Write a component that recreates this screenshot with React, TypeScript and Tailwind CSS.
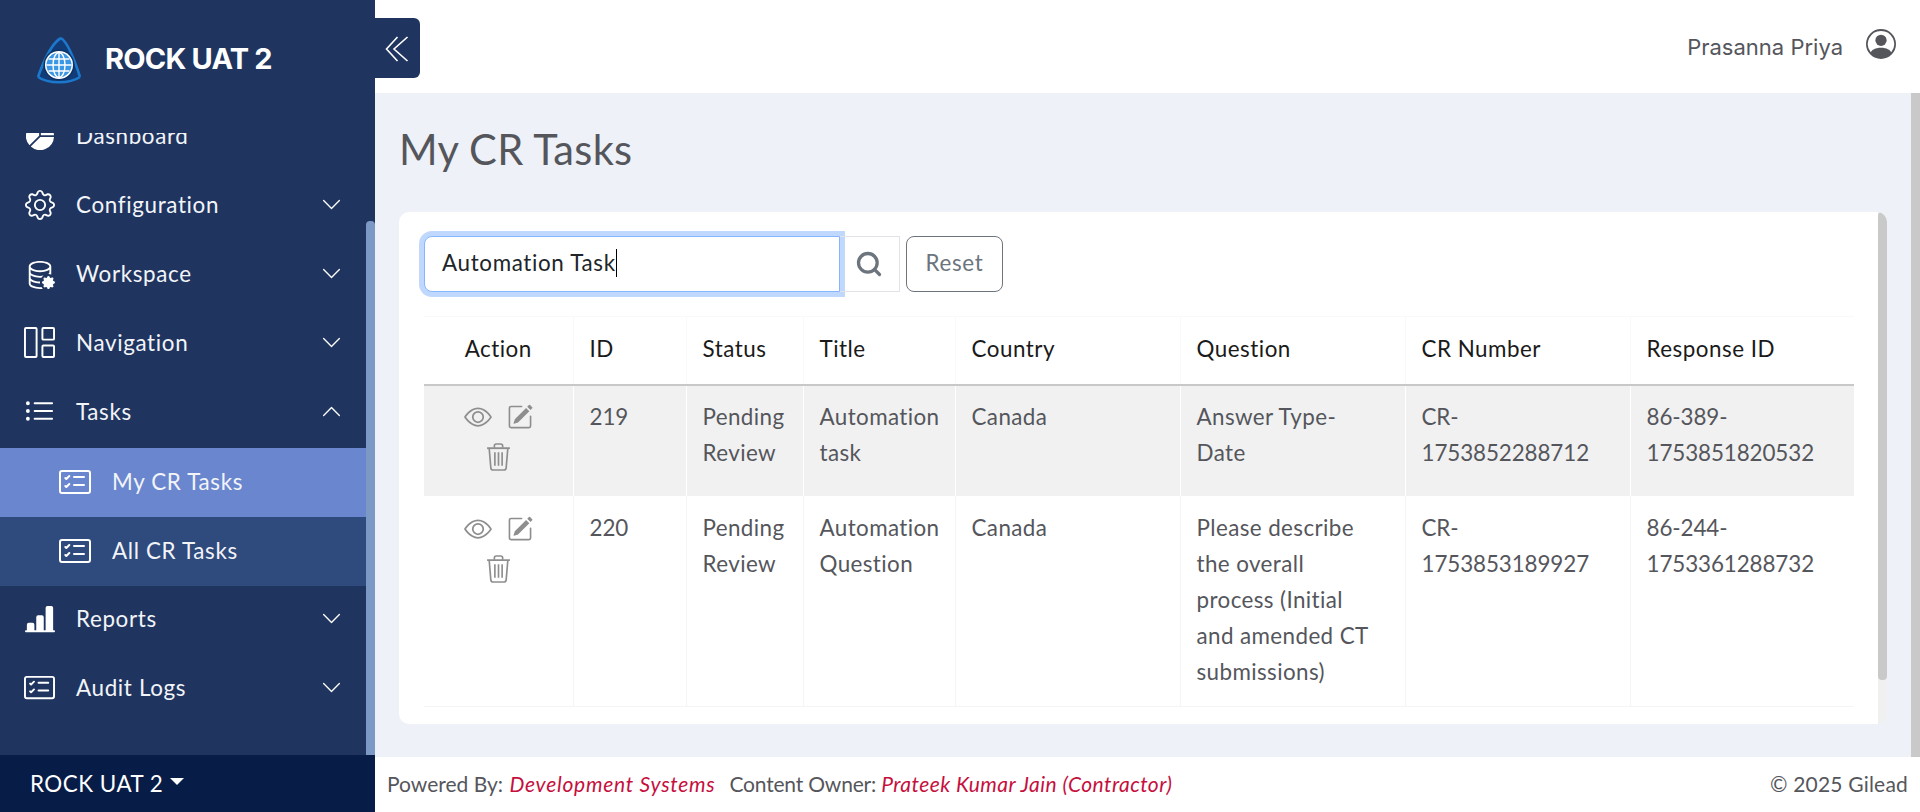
import React from 'react';
import {
  BsBarChartLineFill,
  BsCardChecklist,
  BsChevronDown,
  BsChevronUp,
  BsDatabaseGear,
  BsEye,
  BsGear,
  BsGrid1X2,
  BsListUl,
  BsPencilSquare,
  BsPersonCircle,
  BsPieChartFill,
} from 'react-icons/bs';
import { Search } from 'lucide-react';

const navTop = [
  { label: 'Dashboard', icon: <BsPieChartFill size={28} /> },
  { label: 'Configuration', icon: <BsGear size={30} />, chevron: 'down' },
  { label: 'Workspace', icon: <BsDatabaseGear size={30} />, chevron: 'down' },
  { label: 'Navigation', icon: <BsGrid1X2 size={31} />, chevron: 'down' },
  { label: 'Tasks', icon: <BsListUl size={32} />, chevron: 'up' },
];

const navBottom = [
  { label: 'Reports', icon: <BsBarChartLineFill size={30} />, chevron: 'down' },
  { label: 'Audit Logs', icon: <BsCardChecklist size={31} />, chevron: 'down' },
];

const rows = [
  {
    id: '219',
    status: 'Pending Review',
    title: 'Automation task',
    country: 'Canada',
    question: 'Answer Type-Date',
    cr: 'CR-1753852288712',
    response: '86-389-1753851820532',
  },
  {
    id: '220',
    status: 'Pending Review',
    title: 'Automation Question',
    country: 'Canada',
    question: 'Please describe the overall process (Initial and amended CT submissions)',
    cr: 'CR-1753853189927',
    response: '86-244-1753361288732',
  },
];

const columns = ['Action', 'ID', 'Status', 'Title', 'Country', 'Question', 'CR Number', 'Response ID'];

const Logo = () => (
  <svg width="46" height="48" viewBox="0 0 46 48" fill="none">
    <path d="M25 2 C31 6 37 20 44 40 C34 48 12 48 2 41 C8 24 16 7 25 2 Z" fill="#123c78" />
    <path d="M25 2 C31 6 38 22 44 41 M25 2 C16 7 8 24 2 41 M2 41 C12 48 34 48 44 41" stroke="#1b78cc" strokeWidth="2.6" />
    <circle cx="23" cy="29" r="15.5" fill="#0d3266" />
    <circle cx="23" cy="29" r="14" fill="#fff" />
    <circle cx="23" cy="29" r="12.5" fill="#3a97e6" />
    <g stroke="#fff" strokeWidth="1.4" fill="none">
      <ellipse cx="23" cy="29" rx="6" ry="12.5" />
      <path d="M23 16.5 V41.5 M10.5 29 H35.5 M12.5 23 H33.5 M12.5 35 H33.5" />
    </g>
  </svg>
);

const Collapse = () => (
  <svg width="24" height="26" viewBox="0 0 24 26" fill="none" stroke="#fff" strokeWidth="1.6">
    <path d="M12.5 1 L1.5 13 L12.5 25" />
    <path d="M22.5 1 L9 13 L22.5 25" />
  </svg>
);

const Trash = () => (
  <svg width="25" height="28" viewBox="0 0 24 27" fill="none" stroke="#8e8e8e" strokeWidth="1.6">
    <path d="M1 5 H23" strokeWidth="1.8" />
    <path d="M8 4.5 V2.8 C8 1.8 8.8 1 9.8 1 H14.2 C15.2 1 16 1.8 16 2.8 V4.5" />
    <path d="M3 5 L4.6 24 C4.7 25.2 5.5 26 6.6 26 H17.4 C18.5 26 19.3 25.2 19.4 24 L21 5" />
    <path d="M8.5 9 V22 M12 9 V22 M15.5 9 V22" />
  </svg>
);

const NavRow = ({ item }: { item: { label: string; icon: React.ReactNode; chevron?: string } }) => (
  <div className="h-[69px] flex items-center pb-[4px] pl-6 pr-[24px] shrink-0">
    <span className="w-[31px] flex justify-center text-white">{item.icon}</span>
    <span className="ml-[21px] flex-1 text-[22.4px] tracking-[0.65px] text-[#f2f4f8]">{item.label}</span>
    {item.chevron === 'down' && <BsChevronDown size={21} className="text-white" />}
    {item.chevron === 'up' && <BsChevronUp size={21} className="text-white" />}
  </div>
);

const SubRow = ({ label, active }: { label: string; active?: boolean }) => (
  <div className={`h-[69px] flex items-center pb-[1px] pl-[59px] shrink-0 ${active ? 'bg-[#6a86ce]' : 'bg-[#2f4a7c]'}`}>
    <BsCardChecklist size={32} className="text-white" />
    <span className="ml-[21px] text-[22.4px] tracking-[0.65px] text-[#f2f4f8]">{label}</span>
  </div>
);

export default function App() {
  return (
    <div className="h-[812px] w-[1920px] flex overflow-hidden bg-white font-['Lato',sans-serif] text-[#55565c]">
      {/* Sidebar */}
      <aside className="w-[375px] shrink-0 bg-[#1f3560] flex flex-col">
        <div className="h-[133px] shrink-0 flex items-start pl-[36px] pt-[36px]">
          <Logo />
          <span className="ml-[23px] mt-[1px] text-[29px] font-bold text-white font-['Inter',sans-serif] tracking-[-0.8px]">ROCK UAT 2</span>
        </div>
        <div className="flex-1 min-h-0 flex">
          <nav className="flex-1 min-w-0 overflow-hidden">
            <div className="-mt-[30px]">
              {navTop.map((item) => (
                <NavRow key={item.label} item={item} />
              ))}
              <SubRow label="My CR Tasks" active />
              <SubRow label="All CR Tasks" />
              {navBottom.map((item) => (
                <NavRow key={item.label} item={item} />
              ))}
            </div>
          </nav>
          <div className="w-[9px] shrink-0 mt-[88px] bg-[#7b99c4] rounded-t-[4px]" />
        </div>
        <div className="h-[57px] shrink-0 bg-[#071c47] flex items-center pl-[30px] text-[22.4px] tracking-[0.5px] text-white">
          ROCK UAT 2
          <span className="ml-[7px] mb-[5px] w-0 h-0 border-x-[7px] border-x-transparent border-t-[7px] border-t-white" />
        </div>
      </aside>

      {/* Main */}
      <div className="flex-1 min-w-0 flex flex-col relative">
        <button className="absolute left-0 top-[18px] w-[45px] h-[60px] bg-[#1f3560] rounded-r-[6px] flex items-center justify-center pt-[1px] pr-[2px]">
          <Collapse />
        </button>
        <header className="h-[93px] shrink-0 flex justify-end items-start pt-[29px] pr-[24px]">
          <span className="text-[22px] mt-[2px] font-['Inter',sans-serif] text-[#55565c]">Prasanna Priya</span>
          <BsPersonCircle size={30} className="ml-[23px] text-[#55565c]" />
        </header>
        <div className="flex-1 min-h-0 flex bg-[#eef1f8]">
          <main className="flex-1 min-w-0 pl-[24px] pr-[24px] pt-[31px]">
            <h1 className="text-[41.6px] leading-[50px] tracking-[0.3px] text-[#55565c]">My CR Tasks</h1>
            <div className="mt-[38px] h-[512px] flex rounded-[10px] overflow-hidden">
              <div className="flex-1 min-w-0 bg-white pl-[25px] pr-[24px] pt-[24px]">
                <div className="flex items-center h-[56px]">
                  <div className="w-[416px] h-[56px] border border-[#86b7fe] rounded-l-[8px] shadow-[0_0_0_5px_#c0d8fd] flex items-center pb-[3px] pl-[17px] text-[22.4px] tracking-[0.65px] text-[#212529] bg-white">
                    Automation Task<span className="w-px h-[28px] bg-black" />
                  </div>
                  <div className="w-[60px] h-[56px] border border-l-0 border-[#e1e3e6] flex items-center justify-center pr-[2px] text-[#6c757d]">
                    <Search size={28} strokeWidth={2.8} />
                  </div>
                  <div className="ml-[6px] w-[97px] h-[56px] border border-[#6c757d] rounded-[8px] flex items-center justify-center pb-[2px] text-[22.4px] tracking-[0.7px] text-[#6c757d]">
                    Reset
                  </div>
                </div>
                <table className="mt-[24px] w-[1430px] table-fixed border-collapse">
                  <colgroup>
                    <col className="w-[149px]" />
                    <col className="w-[113px]" />
                    <col className="w-[117px]" />
                    <col className="w-[152px]" />
                    <col className="w-[225px]" />
                    <col className="w-[225px]" />
                    <col className="w-[225px]" />
                    <col className="w-[224px]" />
                  </colgroup>
                  <thead>
                    <tr className="h-[68px] border-b-2 border-b-[#c8c8c8]">
                      {columns.map((c, i) => (
                        <th
                          key={c}
                          className={`font-normal text-[22.4px] tracking-[0.5px] text-[#1a1a1a] border-t border-[#faf8f8] pb-[2px] ${i === 0 ? 'text-center' : 'text-left pl-[16px] border-l'}`}
                        >
                          {c}
                        </th>
                      ))}
                    </tr>
                  </thead>
                  <tbody className="text-[22.4px] tracking-[0.4px] leading-[36px] text-[#55565c]">
                    {rows.map((r, idx) => (
                      <tr key={r.id} className={idx === 0 ? 'h-[111px] bg-[#f1f1f1]' : 'h-[211px] border-b border-[#f6f4f4]'}>
                        <td className={`align-top text-center ${idx === 0 ? 'pt-[17px]' : 'pt-[19px]'}`}>
                          <div className="flex flex-wrap justify-center items-center text-[#8e8e8e] gap-x-[15px] gap-y-[12px] px-[32px]">
                            <BsEye size={28} />
                            <BsPencilSquare size={26} />
                            <Trash />
                          </div>
                        </td>
                        {[r.id, r.status, r.title, r.country, r.question, r.cr, r.response].map((v, i) => (
                          <td
                            key={i}
                            className={`align-top pl-[16px] border-l ${i >= 4 ? 'pr-[20px]' : 'pr-[6px]'} ${i === 0 || i >= 5 ? 'tracking-[-0.1px]' : ''} ${idx === 0 ? 'pt-[13px] border-white' : 'pt-[14px] border-[#f6f4f4]'}`}
                          >
                            {v}
                          </td>
                        ))}
                      </tr>
                    ))}
                  </tbody>
                </table>
              </div>
              <div className="w-[9px] shrink-0 bg-[#f0f0f0]">
                <div className="h-[468px] bg-[#c9c9c9] rounded-[4px]" />
              </div>
            </div>
          </main>
          <div className="w-[9px] shrink-0 bg-[#c9c9c9]" />
        </div>
        <footer className="h-[55px] shrink-0 flex items-center justify-between pb-[2px] pl-[12px] pr-[12px] text-[21px] tracking-[0px] text-[#55565c]">
          <div>
            Powered By: <i className="ml-[1px] tracking-[0.75px] text-[#c5103e]">Development Systems</i>
            <span className="ml-[14px] tracking-[-0.2px]">Content Owner: </span>
            <i className="tracking-[0.45px] text-[#c5103e]">Prateek Kumar Jain (Contractor)</i>
          </div>
          <div className="tracking-[0.2px]">© 2025 Gilead</div>
        </footer>
      </div>
    </div>
  );
}
